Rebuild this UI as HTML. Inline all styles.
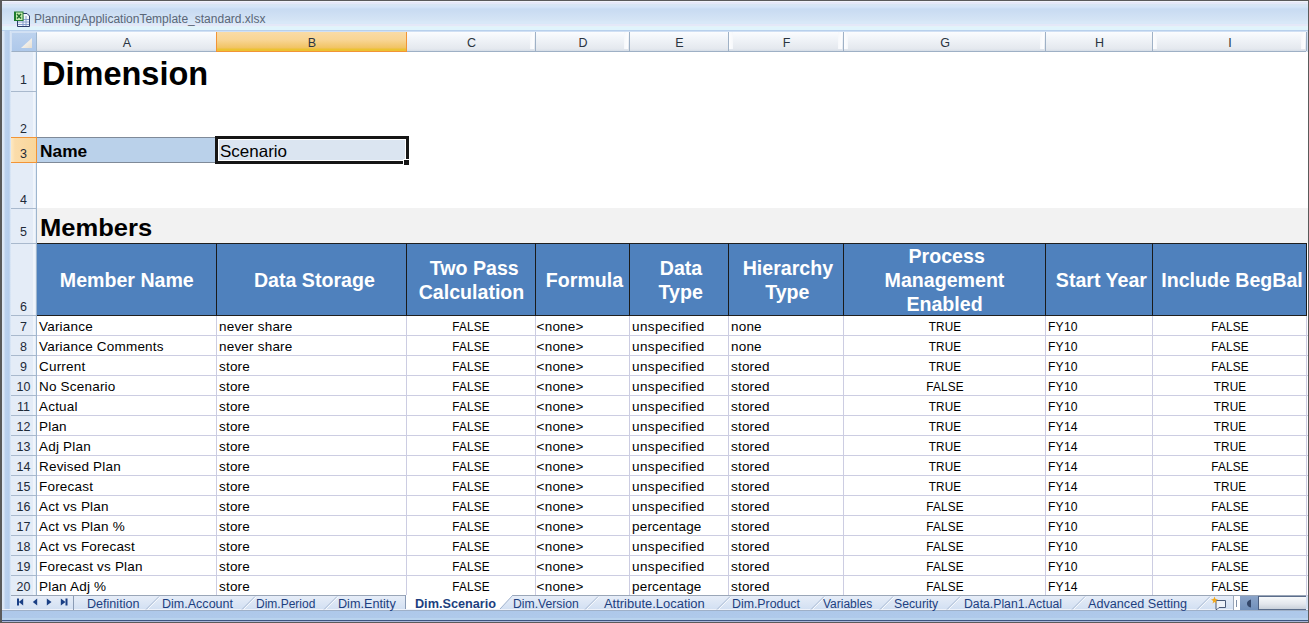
<!DOCTYPE html><html><head><meta charset="utf-8"><style>
*{margin:0;padding:0;box-sizing:border-box}
html,body{width:1309px;height:623px;overflow:hidden;background:#fff;font-family:"Liberation Sans",sans-serif}
.a{position:absolute}
.t{position:absolute;white-space:nowrap}
.d{font-size:13.5px;letter-spacing:0.2px;color:#000;line-height:20px;height:20px}
.c{text-align:center}
.up{display:inline-block}
.hd{position:absolute;white-space:nowrap;color:#fff;font-weight:bold;font-size:19.6px;line-height:24px;height:24px;text-align:center}
.rh{position:absolute;left:11px;width:25px;text-align:center;font-size:12.5px;line-height:14px;color:#1e2a38}
.ch{position:absolute;top:36px;text-align:center;font-size:12.5px;line-height:14px;color:#2a3440}
.tab{position:absolute;top:596px;font-size:12px;line-height:14px;color:#1d3f80;white-space:nowrap}

</style></head><body>
<div class="a" style="left:0;top:0;width:1309px;height:623px;background:#5a5a5a"></div>
<div class="a" style="left:2px;top:1px;width:1306px;height:31px;background:linear-gradient(#f0f4fb 0,#f0f4fb 1px,#e5e8f8 1px,#e5e8f8 3px,#d8e6f2 3px,#d6e5f5 5px,#d4e4f8 6px,#c9dcf2 8px,#cadcf2 10px,#d4e4f5 19px,#d8e8f8 21px,#d8e8f8 23px,#e4e8f8 23px,#e4e8f8 25px,#e8f0f4 25px,#e0f4fc 26px,#e0f4fc 29px,#b8d0ec 29px,#b8d0ec 30px,#d0e0f4 30px)"></div>
<svg class="a" style="left:13px;top:11px" width="18" height="17" viewBox="0 0 18 17"><path d="M4.5 2.5H14l2.5 2.5V15.5H4.5Z" fill="#f2f5fb" stroke="#2c3d6b"/><path d="M5 8.5h11M5 11h11M5 13.5h11M10 5v10M13 5v10" stroke="#7f98c8" stroke-width="0.9"/><rect x="1" y="0.5" width="9.5" height="9.5" fill="#1e7b2e"/><rect x="3" y="1.5" width="6.5" height="7.5" fill="#c9ecb0"/><path d="M4 3l4 4.5M8 3l-4 4.5" stroke="#1d6e2a" stroke-width="1.5"/></svg>
<div class="t" style="left:34px;top:12px;font-size:12px;line-height:14px;color:#5a6677">PlanningApplicationTemplate_standard.xlsx</div>
<div class="a" style="left:2px;top:31px;width:9px;height:578px;background:linear-gradient(90deg,#dce7f5 0,#d9e5f5 2px,#bcd2ee 3px,#b5cdec 7px,#c9dbf1 8px,#e6eef8 9px)"></div>
<div class="a" style="left:1306px;top:31px;width:2px;height:21px;background:linear-gradient(90deg,#e8eef8,#c9d9ee)"></div>
<div class="a" style="left:1306px;top:595px;width:2px;height:15px;background:#d3e0f2"></div>
<div class="a" style="left:11px;top:32px;width:1295px;height:20px;background:linear-gradient(#fbfcfe 0,#f3f6fa 5px,#e4e8ee 17px,#d5dde7 19px);border-bottom:1px solid #9eb0c5"></div>
<div class="a" style="left:11px;top:32px;width:26px;height:20px;background:linear-gradient(#bcd2ee,#aec8ea);border:1px solid #d3e1f3;border-right:1px solid #9eb6ce;border-bottom:1px solid #9eb0c5"></div>
<svg class="a" style="left:21px;top:38px" width="11" height="10"><defs><linearGradient id="g1" x1="0" y1="0" x2="1" y2="1"><stop offset="0" stop-color="#ffffff"/><stop offset="1" stop-color="#e6dfd2"/></linearGradient></defs><path d="M11 0V10H0Z" fill="url(#g1)"/></svg>
<div class="a" style="left:216px;top:32px;width:191px;height:20px;background:linear-gradient(#f9dba6 0,#f8d594 8px,#f1c362 16px,#ecc232 17px,#ecc232 18px);border-bottom:1px solid #f29436;border-left:1px solid #f29436;border-right:1px solid #f29436"></div>
<div class="a" style="left:530px;top:32px;width:4px;height:17px;background:linear-gradient(90deg,#f6f8fb,#fdfdfe)"></div>
<div class="a" style="left:535px;top:32px;width:1px;height:19px;background:#9fb1c6"></div>
<div class="a" style="left:624px;top:32px;width:4px;height:17px;background:linear-gradient(90deg,#f6f8fb,#fdfdfe)"></div>
<div class="a" style="left:629px;top:32px;width:1px;height:19px;background:#9fb1c6"></div>
<div class="a" style="left:729px;top:32px;width:4px;height:17px;background:linear-gradient(90deg,#fdfdfe,#f6f8fb)"></div>
<div class="a" style="left:728px;top:32px;width:1px;height:19px;background:#9fb1c6"></div>
<div class="a" style="left:838px;top:32px;width:4px;height:17px;background:linear-gradient(90deg,#f6f8fb,#fdfdfe)"></div>
<div class="a" style="left:844px;top:32px;width:4px;height:17px;background:linear-gradient(90deg,#fdfdfe,#f6f8fb)"></div>
<div class="a" style="left:843px;top:32px;width:1px;height:19px;background:#9fb1c6"></div>
<div class="a" style="left:1040px;top:32px;width:4px;height:17px;background:linear-gradient(90deg,#f6f8fb,#fdfdfe)"></div>
<div class="a" style="left:1045px;top:32px;width:1px;height:19px;background:#9fb1c6"></div>
<div class="a" style="left:1153px;top:32px;width:4px;height:17px;background:linear-gradient(90deg,#fdfdfe,#f6f8fb)"></div>
<div class="a" style="left:1152px;top:32px;width:1px;height:19px;background:#9fb1c6"></div>
<div class="a" style="left:1301px;top:32px;width:4px;height:17px;background:linear-gradient(90deg,#f6f8fb,#fdfdfe)"></div>
<div class="a" style="left:1306px;top:32px;width:1px;height:19px;background:#9fb1c6"></div>
<div class="ch" style="left:37px;width:180px">A</div>
<div class="ch" style="left:217px;width:190px">B</div>
<div class="ch" style="left:407px;width:129px">C</div>
<div class="ch" style="left:536px;width:94px">D</div>
<div class="ch" style="left:630px;width:99px">E</div>
<div class="ch" style="left:729px;width:115px">F</div>
<div class="ch" style="left:844px;width:202px">G</div>
<div class="ch" style="left:1046px;width:107px">H</div>
<div class="ch" style="left:1153px;width:154px">I</div>
<div class="a" style="left:11px;top:52px;width:26px;height:543px;background:linear-gradient(90deg,#e4ecf7 0,#e4ecf7 22px,#f0f5fb 22px,#f0f5fb 24px,#e4ecf7 24px);border-right:1px solid #9eb6ce"></div>
<div class="a" style="left:11px;top:91px;width:25px;height:1px;background:#a9b9cd"></div>
<div class="rh" style="top:72.7px">1</div>
<div class="a" style="left:11px;top:137px;width:25px;height:1px;background:#a9b9cd"></div>
<div class="rh" style="top:121.7px">2</div>
<div class="a" style="left:11px;top:162px;width:25px;height:1px;background:#a9b9cd"></div>
<div class="a" style="left:11px;top:137px;width:26px;height:26px;background:linear-gradient(90deg,#fde9c4 0,#fbdcaa 4px,#f9d69a 100%);border-top:1px solid #f29436;border-bottom:1px solid #f29436;border-right:1px solid #f29436"></div>
<div class="rh" style="top:146.7px">3</div>
<div class="a" style="left:11px;top:208px;width:25px;height:1px;background:#a9b9cd"></div>
<div class="rh" style="top:192.7px">4</div>
<div class="a" style="left:11px;top:243px;width:25px;height:1px;background:#a9b9cd"></div>
<div class="rh" style="top:224.7px">5</div>
<div class="a" style="left:11px;top:315px;width:25px;height:1px;background:#a9b9cd"></div>
<div class="rh" style="top:299.7px">6</div>
<div class="a" style="left:11px;top:335px;width:25px;height:1px;background:#a9b9cd"></div>
<div class="rh" style="top:319.7px">7</div>
<div class="a" style="left:11px;top:355px;width:25px;height:1px;background:#a9b9cd"></div>
<div class="rh" style="top:339.7px">8</div>
<div class="a" style="left:11px;top:375px;width:25px;height:1px;background:#a9b9cd"></div>
<div class="rh" style="top:359.7px">9</div>
<div class="a" style="left:11px;top:395px;width:25px;height:1px;background:#a9b9cd"></div>
<div class="rh" style="top:379.7px">10</div>
<div class="a" style="left:11px;top:415px;width:25px;height:1px;background:#a9b9cd"></div>
<div class="rh" style="top:399.7px">11</div>
<div class="a" style="left:11px;top:435px;width:25px;height:1px;background:#a9b9cd"></div>
<div class="rh" style="top:419.7px">12</div>
<div class="a" style="left:11px;top:455px;width:25px;height:1px;background:#a9b9cd"></div>
<div class="rh" style="top:439.7px">13</div>
<div class="a" style="left:11px;top:475px;width:25px;height:1px;background:#a9b9cd"></div>
<div class="rh" style="top:459.7px">14</div>
<div class="a" style="left:11px;top:495px;width:25px;height:1px;background:#a9b9cd"></div>
<div class="rh" style="top:479.7px">15</div>
<div class="a" style="left:11px;top:515px;width:25px;height:1px;background:#a9b9cd"></div>
<div class="rh" style="top:499.7px">16</div>
<div class="a" style="left:11px;top:535px;width:25px;height:1px;background:#a9b9cd"></div>
<div class="rh" style="top:519.7px">17</div>
<div class="a" style="left:11px;top:555px;width:25px;height:1px;background:#a9b9cd"></div>
<div class="rh" style="top:539.7px">18</div>
<div class="a" style="left:11px;top:575px;width:25px;height:1px;background:#a9b9cd"></div>
<div class="rh" style="top:559.7px">19</div>
<div class="a" style="left:11px;top:595px;width:25px;height:1px;background:#a9b9cd"></div>
<div class="rh" style="top:579.7px">20</div>
<div class="a" style="left:37px;top:52px;width:1271px;height:543px;background:#fff"></div>
<div class="a" style="left:37px;top:137px;width:179px;height:26px;background:#bad1ea;border-top:1px solid #7f8a98;border-bottom:1px solid #7f8a98"></div>
<div class="a" style="left:215px;top:136px;width:194px;height:28px;background:#dbe5f1;border:3px solid #161616;box-shadow:inset 0 0 0 1px #fff"></div>
<div class="a" style="left:403px;top:159px;width:7px;height:7px;background:#161616;border:1px solid #fff"></div>
<div class="a" style="left:37px;top:208px;width:1271px;height:35px;background:#f2f2f2"></div>
<div class="a" style="left:37px;top:243px;width:1270px;height:73px;background:#4f81bd;border-top:1px solid #1f1f1f;border-bottom:1px solid #1f1f1f"></div>
<div class="a" style="left:216px;top:243px;width:1px;height:73px;background:#1a1a1a"></div>
<div class="a" style="left:406px;top:243px;width:1px;height:73px;background:#1a1a1a"></div>
<div class="a" style="left:535px;top:243px;width:1px;height:73px;background:#1a1a1a"></div>
<div class="a" style="left:629px;top:243px;width:1px;height:73px;background:#1a1a1a"></div>
<div class="a" style="left:728px;top:243px;width:1px;height:73px;background:#1a1a1a"></div>
<div class="a" style="left:843px;top:243px;width:1px;height:73px;background:#1a1a1a"></div>
<div class="a" style="left:1045px;top:243px;width:1px;height:73px;background:#1a1a1a"></div>
<div class="a" style="left:1152px;top:243px;width:1px;height:73px;background:#1a1a1a"></div>
<div class="a" style="left:1306px;top:243px;width:1px;height:73px;background:#1a1a1a"></div>
<div class="a" style="left:37px;top:335px;width:1271px;height:1px;background:#cccde2"></div>
<div class="a" style="left:37px;top:355px;width:1271px;height:1px;background:#cccde2"></div>
<div class="a" style="left:37px;top:375px;width:1271px;height:1px;background:#cccde2"></div>
<div class="a" style="left:37px;top:395px;width:1271px;height:1px;background:#cccde2"></div>
<div class="a" style="left:37px;top:415px;width:1271px;height:1px;background:#cccde2"></div>
<div class="a" style="left:37px;top:435px;width:1271px;height:1px;background:#cccde2"></div>
<div class="a" style="left:37px;top:455px;width:1271px;height:1px;background:#cccde2"></div>
<div class="a" style="left:37px;top:475px;width:1271px;height:1px;background:#cccde2"></div>
<div class="a" style="left:37px;top:495px;width:1271px;height:1px;background:#cccde2"></div>
<div class="a" style="left:37px;top:515px;width:1271px;height:1px;background:#cccde2"></div>
<div class="a" style="left:37px;top:535px;width:1271px;height:1px;background:#cccde2"></div>
<div class="a" style="left:37px;top:555px;width:1271px;height:1px;background:#cccde2"></div>
<div class="a" style="left:37px;top:575px;width:1271px;height:1px;background:#cccde2"></div>
<div class="a" style="left:37px;top:595px;width:1271px;height:1px;background:#cccde2"></div>
<div class="a" style="left:216px;top:316px;width:1px;height:279px;background:#cccde2"></div>
<div class="a" style="left:406px;top:316px;width:1px;height:279px;background:#cccde2"></div>
<div class="a" style="left:535px;top:316px;width:1px;height:279px;background:#cccde2"></div>
<div class="a" style="left:629px;top:316px;width:1px;height:279px;background:#cccde2"></div>
<div class="a" style="left:728px;top:316px;width:1px;height:279px;background:#cccde2"></div>
<div class="a" style="left:843px;top:316px;width:1px;height:279px;background:#cccde2"></div>
<div class="a" style="left:1045px;top:316px;width:1px;height:279px;background:#cccde2"></div>
<div class="a" style="left:1152px;top:316px;width:1px;height:279px;background:#cccde2"></div>
<div class="a" style="left:1306px;top:316px;width:1px;height:279px;background:#cccde2"></div>
<div class="t" style="left:42px;top:55.5px;font-size:32.5px;line-height:36px;font-weight:bold;color:#000">Dimension</div>
<div class="t" style="left:40px;top:141px;font-size:16.5px;line-height:20px;font-weight:bold;color:#000;transform:scaleX(1.05);transform-origin:0 0">Name</div>
<div class="t" style="left:219.5px;top:141px;font-size:16.5px;line-height:20px;color:#000;transform:scaleX(1.03);transform-origin:0 0">Scenario</div>
<div class="t" style="left:40px;top:214px;font-size:23px;line-height:28px;font-weight:bold;color:#000;transform:scaleX(1.11);transform-origin:0 0">Members</div>
<div class="hd" style="left:26.8px;width:200px;top:268.1px">Member Name</div>
<div class="hd" style="left:214.4px;width:200px;top:268.1px">Data Storage</div>
<div class="hd" style="left:374.3px;width:200px;top:256.0px">Two Pass</div>
<div class="hd" style="left:371.5px;width:200px;top:279.8px">Calculation</div>
<div class="hd" style="left:484.5px;width:200px;top:268.1px">Formula</div>
<div class="hd" style="left:581.0px;width:200px;top:256.0px">Data</div>
<div class="hd" style="left:580.7px;width:200px;top:279.8px">Type</div>
<div class="hd" style="left:687.9px;width:200px;top:256.0px">Hierarchy</div>
<div class="hd" style="left:687.3px;width:200px;top:279.8px">Type</div>
<div class="hd" style="left:846.7px;width:200px;top:244.2px">Process</div>
<div class="hd" style="left:844.5px;width:200px;top:267.9px">Management</div>
<div class="hd" style="left:844.5px;width:200px;top:291.6px">Enabled</div>
<div class="hd" style="left:1001.4px;width:200px;top:268.1px">Start Year</div>
<div class="hd" style="left:1132.0px;width:200px;top:268.1px">Include BegBal</div>
<div class="t d" style="left:39px;top:316.9px">Variance</div>
<div class="t d" style="left:219px;top:316.9px">never share</div>
<div class="t d c" style="left:421.2px;width:100px;top:316.9px;transform:scaleX(0.87)">FALSE</div>
<div class="t d" style="left:536.6px;top:316.9px">&lt;none&gt;</div>
<div class="t d" style="left:632px;top:316.9px;letter-spacing:0.4px">unspecified</div>
<div class="t d" style="left:731px;top:316.9px">none</div>
<div class="t d c" style="left:894.5px;width:100px;top:316.9px;transform:scaleX(0.87)">TRUE</div>
<div class="t d" style="left:1048px;top:316.9px;transform:scaleX(0.9);transform-origin:0 0">FY10</div>
<div class="t d c" style="left:1180px;width:100px;top:316.9px;transform:scaleX(0.87)">FALSE</div>
<div class="t d" style="left:39px;top:336.9px">Variance Comments</div>
<div class="t d" style="left:219px;top:336.9px">never share</div>
<div class="t d c" style="left:421.2px;width:100px;top:336.9px;transform:scaleX(0.87)">FALSE</div>
<div class="t d" style="left:536.6px;top:336.9px">&lt;none&gt;</div>
<div class="t d" style="left:632px;top:336.9px;letter-spacing:0.4px">unspecified</div>
<div class="t d" style="left:731px;top:336.9px">none</div>
<div class="t d c" style="left:894.5px;width:100px;top:336.9px;transform:scaleX(0.87)">TRUE</div>
<div class="t d" style="left:1048px;top:336.9px;transform:scaleX(0.9);transform-origin:0 0">FY10</div>
<div class="t d c" style="left:1180px;width:100px;top:336.9px;transform:scaleX(0.87)">FALSE</div>
<div class="t d" style="left:39px;top:356.9px">Current</div>
<div class="t d" style="left:219px;top:356.9px">store</div>
<div class="t d c" style="left:421.2px;width:100px;top:356.9px;transform:scaleX(0.87)">FALSE</div>
<div class="t d" style="left:536.6px;top:356.9px">&lt;none&gt;</div>
<div class="t d" style="left:632px;top:356.9px;letter-spacing:0.4px">unspecified</div>
<div class="t d" style="left:731px;top:356.9px">stored</div>
<div class="t d c" style="left:894.5px;width:100px;top:356.9px;transform:scaleX(0.87)">TRUE</div>
<div class="t d" style="left:1048px;top:356.9px;transform:scaleX(0.9);transform-origin:0 0">FY10</div>
<div class="t d c" style="left:1180px;width:100px;top:356.9px;transform:scaleX(0.87)">FALSE</div>
<div class="t d" style="left:39px;top:376.9px">No Scenario</div>
<div class="t d" style="left:219px;top:376.9px">store</div>
<div class="t d c" style="left:421.2px;width:100px;top:376.9px;transform:scaleX(0.87)">FALSE</div>
<div class="t d" style="left:536.6px;top:376.9px">&lt;none&gt;</div>
<div class="t d" style="left:632px;top:376.9px;letter-spacing:0.4px">unspecified</div>
<div class="t d" style="left:731px;top:376.9px">stored</div>
<div class="t d c" style="left:894.5px;width:100px;top:376.9px;transform:scaleX(0.87)">FALSE</div>
<div class="t d" style="left:1048px;top:376.9px;transform:scaleX(0.9);transform-origin:0 0">FY10</div>
<div class="t d c" style="left:1180px;width:100px;top:376.9px;transform:scaleX(0.87)">TRUE</div>
<div class="t d" style="left:39px;top:396.9px">Actual</div>
<div class="t d" style="left:219px;top:396.9px">store</div>
<div class="t d c" style="left:421.2px;width:100px;top:396.9px;transform:scaleX(0.87)">FALSE</div>
<div class="t d" style="left:536.6px;top:396.9px">&lt;none&gt;</div>
<div class="t d" style="left:632px;top:396.9px;letter-spacing:0.4px">unspecified</div>
<div class="t d" style="left:731px;top:396.9px">stored</div>
<div class="t d c" style="left:894.5px;width:100px;top:396.9px;transform:scaleX(0.87)">TRUE</div>
<div class="t d" style="left:1048px;top:396.9px;transform:scaleX(0.9);transform-origin:0 0">FY10</div>
<div class="t d c" style="left:1180px;width:100px;top:396.9px;transform:scaleX(0.87)">TRUE</div>
<div class="t d" style="left:39px;top:416.9px">Plan</div>
<div class="t d" style="left:219px;top:416.9px">store</div>
<div class="t d c" style="left:421.2px;width:100px;top:416.9px;transform:scaleX(0.87)">FALSE</div>
<div class="t d" style="left:536.6px;top:416.9px">&lt;none&gt;</div>
<div class="t d" style="left:632px;top:416.9px;letter-spacing:0.4px">unspecified</div>
<div class="t d" style="left:731px;top:416.9px">stored</div>
<div class="t d c" style="left:894.5px;width:100px;top:416.9px;transform:scaleX(0.87)">TRUE</div>
<div class="t d" style="left:1048px;top:416.9px;transform:scaleX(0.9);transform-origin:0 0">FY14</div>
<div class="t d c" style="left:1180px;width:100px;top:416.9px;transform:scaleX(0.87)">TRUE</div>
<div class="t d" style="left:39px;top:436.9px">Adj Plan</div>
<div class="t d" style="left:219px;top:436.9px">store</div>
<div class="t d c" style="left:421.2px;width:100px;top:436.9px;transform:scaleX(0.87)">FALSE</div>
<div class="t d" style="left:536.6px;top:436.9px">&lt;none&gt;</div>
<div class="t d" style="left:632px;top:436.9px;letter-spacing:0.4px">unspecified</div>
<div class="t d" style="left:731px;top:436.9px">stored</div>
<div class="t d c" style="left:894.5px;width:100px;top:436.9px;transform:scaleX(0.87)">TRUE</div>
<div class="t d" style="left:1048px;top:436.9px;transform:scaleX(0.9);transform-origin:0 0">FY14</div>
<div class="t d c" style="left:1180px;width:100px;top:436.9px;transform:scaleX(0.87)">TRUE</div>
<div class="t d" style="left:39px;top:456.9px">Revised Plan</div>
<div class="t d" style="left:219px;top:456.9px">store</div>
<div class="t d c" style="left:421.2px;width:100px;top:456.9px;transform:scaleX(0.87)">FALSE</div>
<div class="t d" style="left:536.6px;top:456.9px">&lt;none&gt;</div>
<div class="t d" style="left:632px;top:456.9px;letter-spacing:0.4px">unspecified</div>
<div class="t d" style="left:731px;top:456.9px">stored</div>
<div class="t d c" style="left:894.5px;width:100px;top:456.9px;transform:scaleX(0.87)">TRUE</div>
<div class="t d" style="left:1048px;top:456.9px;transform:scaleX(0.9);transform-origin:0 0">FY14</div>
<div class="t d c" style="left:1180px;width:100px;top:456.9px;transform:scaleX(0.87)">FALSE</div>
<div class="t d" style="left:39px;top:476.9px">Forecast</div>
<div class="t d" style="left:219px;top:476.9px">store</div>
<div class="t d c" style="left:421.2px;width:100px;top:476.9px;transform:scaleX(0.87)">FALSE</div>
<div class="t d" style="left:536.6px;top:476.9px">&lt;none&gt;</div>
<div class="t d" style="left:632px;top:476.9px;letter-spacing:0.4px">unspecified</div>
<div class="t d" style="left:731px;top:476.9px">stored</div>
<div class="t d c" style="left:894.5px;width:100px;top:476.9px;transform:scaleX(0.87)">TRUE</div>
<div class="t d" style="left:1048px;top:476.9px;transform:scaleX(0.9);transform-origin:0 0">FY14</div>
<div class="t d c" style="left:1180px;width:100px;top:476.9px;transform:scaleX(0.87)">TRUE</div>
<div class="t d" style="left:39px;top:496.9px">Act vs Plan</div>
<div class="t d" style="left:219px;top:496.9px">store</div>
<div class="t d c" style="left:421.2px;width:100px;top:496.9px;transform:scaleX(0.87)">FALSE</div>
<div class="t d" style="left:536.6px;top:496.9px">&lt;none&gt;</div>
<div class="t d" style="left:632px;top:496.9px;letter-spacing:0.4px">unspecified</div>
<div class="t d" style="left:731px;top:496.9px">stored</div>
<div class="t d c" style="left:894.5px;width:100px;top:496.9px;transform:scaleX(0.87)">FALSE</div>
<div class="t d" style="left:1048px;top:496.9px;transform:scaleX(0.9);transform-origin:0 0">FY10</div>
<div class="t d c" style="left:1180px;width:100px;top:496.9px;transform:scaleX(0.87)">FALSE</div>
<div class="t d" style="left:39px;top:516.9px">Act vs Plan %</div>
<div class="t d" style="left:219px;top:516.9px">store</div>
<div class="t d c" style="left:421.2px;width:100px;top:516.9px;transform:scaleX(0.87)">FALSE</div>
<div class="t d" style="left:536.6px;top:516.9px">&lt;none&gt;</div>
<div class="t d" style="left:632px;top:516.9px">percentage</div>
<div class="t d" style="left:731px;top:516.9px">stored</div>
<div class="t d c" style="left:894.5px;width:100px;top:516.9px;transform:scaleX(0.87)">FALSE</div>
<div class="t d" style="left:1048px;top:516.9px;transform:scaleX(0.9);transform-origin:0 0">FY10</div>
<div class="t d c" style="left:1180px;width:100px;top:516.9px;transform:scaleX(0.87)">FALSE</div>
<div class="t d" style="left:39px;top:536.9px">Act vs Forecast</div>
<div class="t d" style="left:219px;top:536.9px">store</div>
<div class="t d c" style="left:421.2px;width:100px;top:536.9px;transform:scaleX(0.87)">FALSE</div>
<div class="t d" style="left:536.6px;top:536.9px">&lt;none&gt;</div>
<div class="t d" style="left:632px;top:536.9px;letter-spacing:0.4px">unspecified</div>
<div class="t d" style="left:731px;top:536.9px">stored</div>
<div class="t d c" style="left:894.5px;width:100px;top:536.9px;transform:scaleX(0.87)">FALSE</div>
<div class="t d" style="left:1048px;top:536.9px;transform:scaleX(0.9);transform-origin:0 0">FY10</div>
<div class="t d c" style="left:1180px;width:100px;top:536.9px;transform:scaleX(0.87)">FALSE</div>
<div class="t d" style="left:39px;top:556.9px">Forecast vs Plan</div>
<div class="t d" style="left:219px;top:556.9px">store</div>
<div class="t d c" style="left:421.2px;width:100px;top:556.9px;transform:scaleX(0.87)">FALSE</div>
<div class="t d" style="left:536.6px;top:556.9px">&lt;none&gt;</div>
<div class="t d" style="left:632px;top:556.9px;letter-spacing:0.4px">unspecified</div>
<div class="t d" style="left:731px;top:556.9px">stored</div>
<div class="t d c" style="left:894.5px;width:100px;top:556.9px;transform:scaleX(0.87)">FALSE</div>
<div class="t d" style="left:1048px;top:556.9px;transform:scaleX(0.9);transform-origin:0 0">FY10</div>
<div class="t d c" style="left:1180px;width:100px;top:556.9px;transform:scaleX(0.87)">FALSE</div>
<div class="t d" style="left:39px;top:576.9px">Plan Adj %</div>
<div class="t d" style="left:219px;top:576.9px">store</div>
<div class="t d c" style="left:421.2px;width:100px;top:576.9px;transform:scaleX(0.87)">FALSE</div>
<div class="t d" style="left:536.6px;top:576.9px">&lt;none&gt;</div>
<div class="t d" style="left:632px;top:576.9px">percentage</div>
<div class="t d" style="left:731px;top:576.9px">stored</div>
<div class="t d c" style="left:894.5px;width:100px;top:576.9px;transform:scaleX(0.87)">FALSE</div>
<div class="t d" style="left:1048px;top:576.9px;transform:scaleX(0.9);transform-origin:0 0">FY14</div>
<div class="t d c" style="left:1180px;width:100px;top:576.9px;transform:scaleX(0.87)">FALSE</div>
<div class="a" style="left:11px;top:595px;width:1295px;height:1px;background:#9aa6b8"></div>
<div class="a" style="left:11px;top:596px;width:1222px;height:13px;background:linear-gradient(#e6edf8,#d3e0f2)"></div>
<div class="a" style="left:2px;top:609px;width:1306px;height:13px;background:linear-gradient(#eef2fa 0,#eef2fa 1px,#9fb0c8 1px,#9fb0c8 2px,#aec8ea 2px,#afc9ea 9px,#b9d3ee 9px,#b9d3ee 11px,#3f5580 11px,#3f5580 12px,#a8b4d8 12px)"></div>
<svg class="a" style="left:8px;top:592px" width="70" height="18" fill="#1a3f85"><rect x="9" y="6.5" width="2" height="7"/><path d="M15.2 6.5v7L10.8 10z"/><path d="M29.2 6.5v7L24.8 10z"/><path d="M38.8 6.5v7L43.5 10z"/><path d="M52.8 6.5v7L57.5 10z"/><rect x="57.5" y="6.5" width="2" height="7"/></svg>
<div class="a" style="left:73px;top:596px;width:1px;height:14px;background:#8a9bb5"></div>
<svg class="a" style="left:405px;top:595px" width="112" height="15"><path d="M0 0H108L95 14H1Z" fill="#fff"/><path d="M0.5 0V14" stroke="#8a9bb5"/><path d="M108 0L95 14" stroke="#9fb1cc"/></svg>
<svg class="a" style="left:145px;top:596px" width="16" height="14"><path d="M1 13.5L14 0.5" stroke="#a8b9d2" stroke-width="1"/><path d="M2.5 13.5L15 1" stroke="#f6f9fd" stroke-width="1"/></svg>
<svg class="a" style="left:241px;top:596px" width="16" height="14"><path d="M1 13.5L14 0.5" stroke="#a8b9d2" stroke-width="1"/><path d="M2.5 13.5L15 1" stroke="#f6f9fd" stroke-width="1"/></svg>
<svg class="a" style="left:323px;top:596px" width="16" height="14"><path d="M1 13.5L14 0.5" stroke="#a8b9d2" stroke-width="1"/><path d="M2.5 13.5L15 1" stroke="#f6f9fd" stroke-width="1"/></svg>
<svg class="a" style="left:584px;top:596px" width="16" height="14"><path d="M1 13.5L14 0.5" stroke="#a8b9d2" stroke-width="1"/><path d="M2.5 13.5L15 1" stroke="#f6f9fd" stroke-width="1"/></svg>
<svg class="a" style="left:716px;top:596px" width="16" height="14"><path d="M1 13.5L14 0.5" stroke="#a8b9d2" stroke-width="1"/><path d="M2.5 13.5L15 1" stroke="#f6f9fd" stroke-width="1"/></svg>
<svg class="a" style="left:810px;top:596px" width="16" height="14"><path d="M1 13.5L14 0.5" stroke="#a8b9d2" stroke-width="1"/><path d="M2.5 13.5L15 1" stroke="#f6f9fd" stroke-width="1"/></svg>
<svg class="a" style="left:879px;top:596px" width="16" height="14"><path d="M1 13.5L14 0.5" stroke="#a8b9d2" stroke-width="1"/><path d="M2.5 13.5L15 1" stroke="#f6f9fd" stroke-width="1"/></svg>
<svg class="a" style="left:946px;top:596px" width="16" height="14"><path d="M1 13.5L14 0.5" stroke="#a8b9d2" stroke-width="1"/><path d="M2.5 13.5L15 1" stroke="#f6f9fd" stroke-width="1"/></svg>
<svg class="a" style="left:1071px;top:596px" width="16" height="14"><path d="M1 13.5L14 0.5" stroke="#a8b9d2" stroke-width="1"/><path d="M2.5 13.5L15 1" stroke="#f6f9fd" stroke-width="1"/></svg>
<svg class="a" style="left:1196px;top:596px" width="16" height="14"><path d="M1 13.5L14 0.5" stroke="#a8b9d2" stroke-width="1"/><path d="M2.5 13.5L15 1" stroke="#f6f9fd" stroke-width="1"/></svg>
<div class="tab" style="left:86.5px;top:597px;transform:scaleX(1.05);transform-origin:1px 0">Definition</div>
<div class="tab" style="left:162.3px;top:597px;transform:scaleX(1.045);transform-origin:1px 0">Dim.Account</div>
<div class="tab" style="left:256px;top:597px;transform:scaleX(1.0);transform-origin:1px 0">Dim.Period</div>
<div class="tab" style="left:338px;top:597px;transform:scaleX(1.057);transform-origin:1px 0">Dim.Entity</div>
<div class="tab" style="left:414.7px;top:597px;font-weight:bold;transform:scaleX(1.058);transform-origin:1px 0">Dim.Scenario</div>
<div class="tab" style="left:513px;top:597px;transform:scaleX(1.016);transform-origin:1px 0">Dim.Version</div>
<div class="tab" style="left:603.8px;top:597px;transform:scaleX(1.08);transform-origin:1px 0">Attribute.Location</div>
<div class="tab" style="left:732.3px;top:597px;transform:scaleX(1.03);transform-origin:1px 0">Dim.Product</div>
<div class="tab" style="left:823px;top:597px;transform:scaleX(1.0);transform-origin:1px 0">Variables</div>
<div class="tab" style="left:893.6px;top:597px;transform:scaleX(1.02);transform-origin:1px 0">Security</div>
<div class="tab" style="left:963.6px;top:597px;transform:scaleX(1.02);transform-origin:1px 0">Data.Plan1.Actual</div>
<div class="tab" style="left:1088.4px;top:597px;transform:scaleX(1.054);transform-origin:1px 0">Advanced Setting</div>
<svg class="a" style="left:1208px;top:596px" width="20" height="14"><path d="M8 4.5H17.5V11.5H11L9 13.5H8Z" fill="#eef2f8" stroke="#4a5a78"/><path d="M6.5 0.5L7.5 3L10 3.5L7.8 5L8.5 7.5L6.5 6L4.5 7.5L5.2 5L3 3.5L5.5 3Z" fill="#f2a81d"/></svg>
<div class="a" style="left:1233px;top:596px;width:7px;height:14px;background:#fdfdfe;border-left:1px solid #9aa6b8"></div>
<div class="a" style="left:1236px;top:600px;width:1px;height:7px;background:#8090a8"></div>
<div class="a" style="left:1240px;top:596px;width:19px;height:14px;background:linear-gradient(#8aa3c8,#7190bb);border-right:1px solid #4c5f80"></div>
<svg class="a" style="left:1246px;top:599px" width="6" height="9"><path d="M5 0.5v8C2 8 1 6 1 4.5S2 1 5 0.5z" fill="#34476a"/></svg>
<div class="a" style="left:1259px;top:596px;width:47px;height:14px;background:linear-gradient(#f7f9fb,#e3e7ed 7px,#c9d0da);border-top:1px solid #5b6d8b;border-bottom:1px solid #5b6d8b"></div>
</body></html>
